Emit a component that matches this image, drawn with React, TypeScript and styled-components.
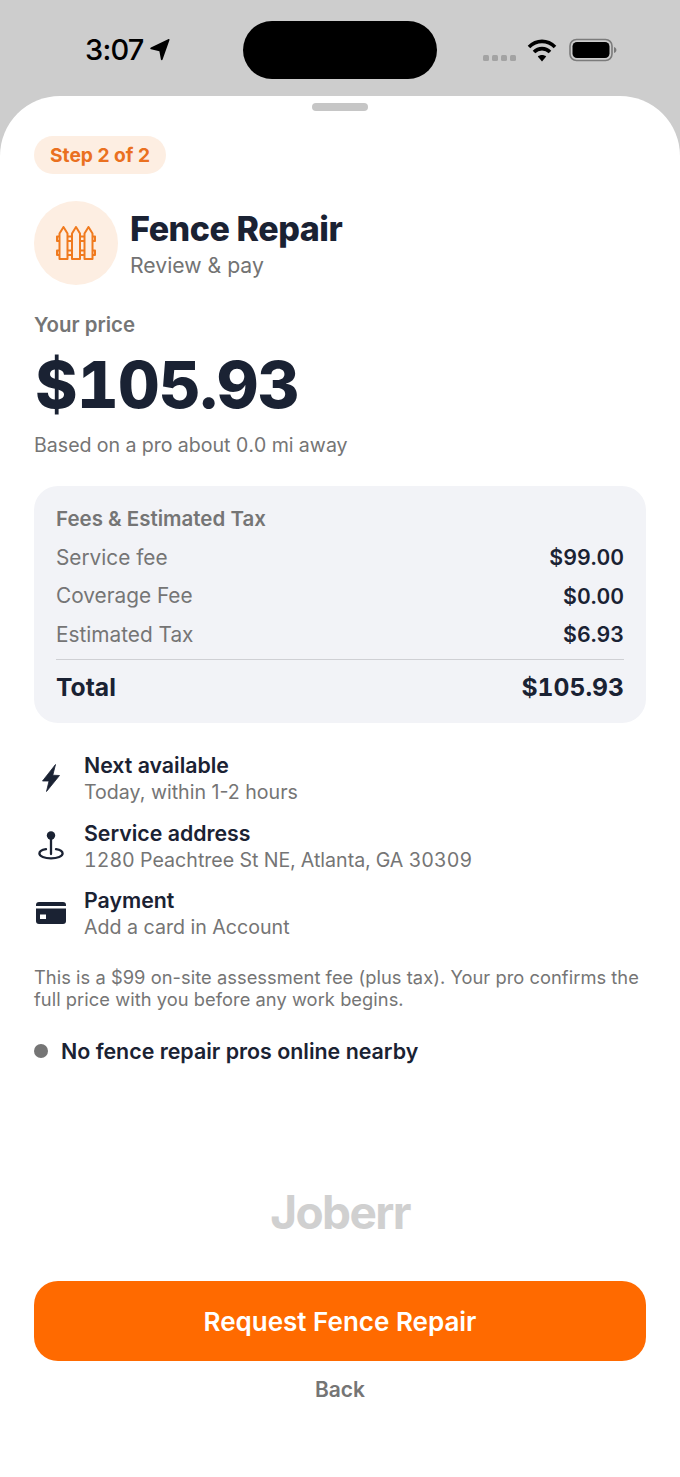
import styled, { createGlobalStyle } from "styled-components";

const GlobalStyle = createGlobalStyle`
  html, body {
    margin: 0;
    padding: 0;
    background: #ffffff;
    font-family: Inter, "Liberation Sans", sans-serif;
  }
  * { box-sizing: border-box; }
`;

const Screen = styled.div`
  width: 680px;
  height: 1477px;
  display: flex;
  flex-direction: column;
  background: #cdcdcd;
  overflow: hidden;
`;

const StatusBar = styled.div`
  height: 96px;
  flex: none;
  display: grid;
  grid-template-columns: 243px 194px 1fr;
  padding-top: 21px;
  align-items: start;
`;

const TimeGroup = styled.div`
  display: flex;
  align-items: center;
  gap: 5px;
  padding: 11px 0 0 85px;
`;

const Time = styled.span`
  font-size: 29px;
  line-height: 36px;
  font-weight: 500;
  color: #000;
  letter-spacing: -0.8px;
`;

const Island = styled.div`
  height: 58px;
  border-radius: 29px;
  background: #000;
`;

const StatusIcons = styled.div`
  display: flex;
  align-items: center;
  gap: 12px;
  padding: 17px 0 0 46px;
`;

const SignalDots = styled.div`
  display: flex;
  gap: 3px;
  margin: 16px -1px 0 0;
`;

const Dot = styled.span`
  width: 6px;
  height: 6px;
  border-radius: 1.5px;
  background: #a3a3a3;
`;

const Sheet = styled.div`
  flex: 1;
  display: flex;
  flex-direction: column;
  background: #fff;
  border-radius: 60px 60px 0 0;
  padding: 7px 34px 0;
`;

const Grabber = styled.div`
  width: 56px;
  height: 8px;
  border-radius: 4px;
  background: #c6c6c6;
  align-self: center;
  margin-bottom: 25px;
`;

const Badge = styled.div`
  align-self: flex-start;
  height: 38px;
  padding: 0 16px;
  display: flex;
  align-items: center;
  border-radius: 19px;
  background: #fdeee2;
  color: #ea7020;
  font-size: 19.2px;
  font-weight: 700;
`;

const Header = styled.div`
  display: flex;
  align-items: center;
  gap: 12px;
  margin-top: 27px;
`;

const IconCircle = styled.div`
  width: 84px;
  height: 84px;
  flex: none;
  border-radius: 50%;
  background: #fdeee2;
  display: flex;
  align-items: center;
  justify-content: center;
`;

const HeaderText = styled.div`
  display: flex;
  flex-direction: column;
  gap: 3px;
  margin-top: 1px;
`;

const Title = styled.div`
  font-size: 34px;
  line-height: 40px;
  font-weight: 800;
  letter-spacing: -0.45px;
  color: #1a2233;
`;

const Subtitle = styled.div`
  font-size: 21.2px;
  line-height: 27px;
  color: #737373;
`;

const PriceLabel = styled.div`
  margin-top: 27px;
  font-size: 20.4px;
  line-height: 26px;
  font-weight: 600;
  color: #757575;
`;

const Price = styled.div`
  margin-top: 8px;
  padding-left: 1px;
  font-size: 64.5px;
  line-height: 78px;
  font-weight: 800;
  letter-spacing: -0.6px;
  font-variant-numeric: tabular-nums;
  color: #1a2233;
`;

const PriceNote = styled.div`
  margin-top: 8px;
  font-size: 19.6px;
  line-height: 26px;
  font-variant-numeric: tabular-nums;
  color: #757575;
`;

const FeeCard = styled.div`
  margin-top: 28px;
  height: 237px;
  padding: 20px 22px 0;
  border-radius: 24px;
  background: #f2f3f7;
  display: flex;
  flex-direction: column;
`;

const FeeHeading = styled.div`
  font-size: 20.5px;
  line-height: 26px;
  font-weight: 600;
  color: #757575;
  margin-bottom: 6px;
`;

const FeeRow = styled.div`
  display: flex;
  justify-content: space-between;
  align-items: center;
  height: 38.6px;
`;

const FeeLabel = styled.span`
  font-size: 20.8px;
  color: #757575;
`;

const FeeValue = styled.span`
  font-size: 21.3px;
  font-weight: 600;
  font-variant-numeric: tabular-nums;
  color: #1a2233;
`;

const TotalRow = styled.div`
  display: flex;
  justify-content: space-between;
  align-items: center;
  margin-top: 5px;
  padding-top: 12px;
  border-top: 1px solid #cfd0d4;
  font-size: 24.7px;
  line-height: 30px;
  font-weight: 700;
  font-variant-numeric: tabular-nums;
  color: #1a2233;
`;

const InfoList = styled.div`
  margin-top: 28px;
  display: flex;
  flex-direction: column;
  gap: 13.5px;
`;

const InfoRow = styled.div`
  display: flex;
  align-items: center;
`;

const InfoIcon = styled.div`
  width: 34px;
  margin-right: 16px;
  display: flex;
  justify-content: center;
  color: #1a2233;
`;

const InfoText = styled.div`
  display: flex;
  flex-direction: column;
`;

const InfoTitle = styled.div`
  font-size: 21.3px;
  line-height: 28px;
  font-weight: 600;
  color: #1a2233;
`;

const InfoSub = styled.div<{ $tabular?: boolean }>`
  font-size: 19.6px;
  line-height: 26px;
  font-variant-numeric: ${(p) => (p.$tabular ? "tabular-nums" : "normal")};
  color: #757575;
`;

const Disclaimer = styled.div`
  margin-top: 26px;
  font-size: 18.3px;
  line-height: 22px;
  letter-spacing: 0.05px;
  color: #757575;
`;

const Availability = styled.div`
  margin-top: 27px;
  display: flex;
  align-items: center;
  gap: 13px;
  font-size: 21.4px;
  line-height: 28px;
  font-weight: 600;
  color: #1a2233;
`;

const StatusDot = styled.span`
  width: 14px;
  height: 14px;
  border-radius: 50%;
  background: #757575;
`;

const Logo = styled.div`
  margin-top: 119px;
  text-align: center;
  font-size: 46px;
  line-height: 56px;
  font-weight: 700;
  letter-spacing: -1.6px;
  color: #d0d0d0;
`;

const RequestButton = styled.button`
  margin-top: 41px;
  width: 100%;
  height: 80px;
  flex: none;
  border: 0;
  border-radius: 24px;
  background: #ff6a00;
  color: #fff;
  font-family: inherit;
  font-size: 26px;
  font-weight: 600;
`;

const BackLink = styled.div`
  margin-top: 15px;
  text-align: center;
  font-size: 21px;
  line-height: 28px;
  font-weight: 600;
  color: #757575;
`;

const fees = [
  { label: "Service fee", value: "$99.00" },
  { label: "Coverage Fee", value: "$0.00" },
  { label: "Estimated Tax", value: "$6.93" },
];

const picketCentres = [7.5, 20, 32.5];

const FenceIcon = () => (
  <svg width="40" height="34" viewBox="0 0 40 34" fill="none" stroke="#f07a1e" strokeWidth="2" strokeLinejoin="round">
    {picketCentres.map((x) => (
      <path key={x} d={`M${x - 4} 33V7.500L${x} 1L${x + 4} 7.500V33Z`} />
    ))}
    <path d="M3.500 10.500H1V15H3.500M11.500 10.500H16M11.500 15H16M24 10.500H28.500M24 15H28.500M36.500 10.500H39V15H36.500" />
    <path d="M3.500 24.500H1V29H3.500M11.500 24.500H16M11.500 29H16M24 24.500H28.500M24 29H28.500M36.500 24.500H39V29H36.500" />
  </svg>
);

const BoltIcon = () => (
  <svg width="18" height="28" viewBox="0 0 18 28">
    <path d="M13.5 .5 .5 17 7 17 4.5 27.5 17.5 11.5 10.8 11.2Z" fill="#1a2233" stroke="#1a2233" strokeWidth=".8" strokeLinejoin="round" />
  </svg>
);

const PinIcon = () => (
  <svg width="26" height="29" viewBox="0 0 26 29" fill="none" stroke="#1a2233" strokeWidth="2.3" strokeLinecap="round">
    <circle cx="13" cy="4.5" r="4.2" fill="#1a2233" stroke="none" />
    <path d="M13 7V23" />
    <path d="M8 18.2C4 18.9 1.4 20.5 1.4 22.6 1.4 25.4 6.6 27.4 13 27.4S24.6 25.4 24.6 22.6C24.6 20.5 22 18.9 18 18.2" />
  </svg>
);

const CardIcon = () => (
  <svg width="30" height="22" viewBox="0 0 30 22">
    <path d="M3 0H27A3 3 0 0 1 30 3V4H0V3A3 3 0 0 1 3 0Z" fill="#1a2233" />
    <path d="M0 6.5H30V19A3 3 0 0 1 27 22H3A3 3 0 0 1 0 19Z" fill="#1a2233" />
    <rect x="4" y="12.5" width="6" height="4.5" fill="#fff" />
  </svg>
);

const App = () => (
  <>
    <GlobalStyle />
    <Screen>
      <StatusBar>
        <TimeGroup>
          <Time>3:07</Time>
          <svg width="22" height="22" viewBox="0 0 20 22">
            <path d="M19.5 1 12.6 20.6c-.3.9-1.5.8-1.7-.1L9.4 12.2 1 10.3C.1 10.1 0 9 .9 8.6L18.6.1c.6-.3 1.1.3.9.9Z" fill="#000" />
          </svg>
        </TimeGroup>
        <Island />
        <StatusIcons>
          <SignalDots>
            <Dot /><Dot /><Dot /><Dot />
          </SignalDots>
          <svg width="30" height="24" viewBox="0 0 30 24" fill="none" stroke="#000" strokeWidth="3.6">
            <path d="M2 9C9.5 1.500 20.500 1.500 28 9" />
            <path d="M7 14C11.500 9.500 18.500 9.500 23 14" />
            <path d="M15 23.500 10.800 18.500C13 16.500 17 16.500 19.200 18.500Z" fill="#000" stroke="none" />
          </svg>
          <svg width="48" height="24" viewBox="0 0 48 24">
            <rect x="1" y="1.500" width="42" height="21" rx="6.5" fill="none" stroke="#7b7b7b" strokeWidth="1.6" />
            <rect x="3.500" y="4" width="37" height="16" rx="4.5" fill="#000" />
            <path d="M45 9c1.600.5 2.400 1.600 2.400 3s-.8 2.500-2.400 3Z" fill="#7b7b7b" />
          </svg>
        </StatusIcons>
      </StatusBar>
      <Sheet>
        <Grabber />
        <Badge>Step 2 of 2</Badge>
        <Header>
          <IconCircle><FenceIcon /></IconCircle>
          <HeaderText>
            <Title>Fence Repair</Title>
            <Subtitle>Review &amp; pay</Subtitle>
          </HeaderText>
        </Header>
        <PriceLabel>Your price</PriceLabel>
        <Price>$105.93</Price>
        <PriceNote>Based on a pro about 0.0 mi away</PriceNote>
        <FeeCard>
          <FeeHeading>Fees &amp; Estimated Tax</FeeHeading>
          {fees.map((fee) => (
            <FeeRow key={fee.label}>
              <FeeLabel>{fee.label}</FeeLabel>
              <FeeValue>{fee.value}</FeeValue>
            </FeeRow>
          ))}
          <TotalRow>
            <span>Total</span>
            <span>$105.93</span>
          </TotalRow>
        </FeeCard>
        <InfoList>
          <InfoRow>
            <InfoIcon><BoltIcon /></InfoIcon>
            <InfoText>
              <InfoTitle>Next available</InfoTitle>
              <InfoSub>Today, within 1-2 hours</InfoSub>
            </InfoText>
          </InfoRow>
          <InfoRow>
            <InfoIcon><PinIcon /></InfoIcon>
            <InfoText>
              <InfoTitle>Service address</InfoTitle>
              <InfoSub $tabular>1280 Peachtree St NE, Atlanta, GA 30309</InfoSub>
            </InfoText>
          </InfoRow>
          <InfoRow>
            <InfoIcon><CardIcon /></InfoIcon>
            <InfoText>
              <InfoTitle>Payment</InfoTitle>
              <InfoSub>Add a card in Account</InfoSub>
            </InfoText>
          </InfoRow>
        </InfoList>
        <Disclaimer>
          This is a $99 on-site assessment fee (plus tax). Your pro confirms the full price with you before any work begins.
        </Disclaimer>
        <Availability>
          <StatusDot />
          No fence repair pros online nearby
        </Availability>
        <Logo>Joberr</Logo>
        <RequestButton>Request Fence Repair</RequestButton>
        <BackLink>Back</BackLink>
      </Sheet>
    </Screen>
  </>
);

export default App;
